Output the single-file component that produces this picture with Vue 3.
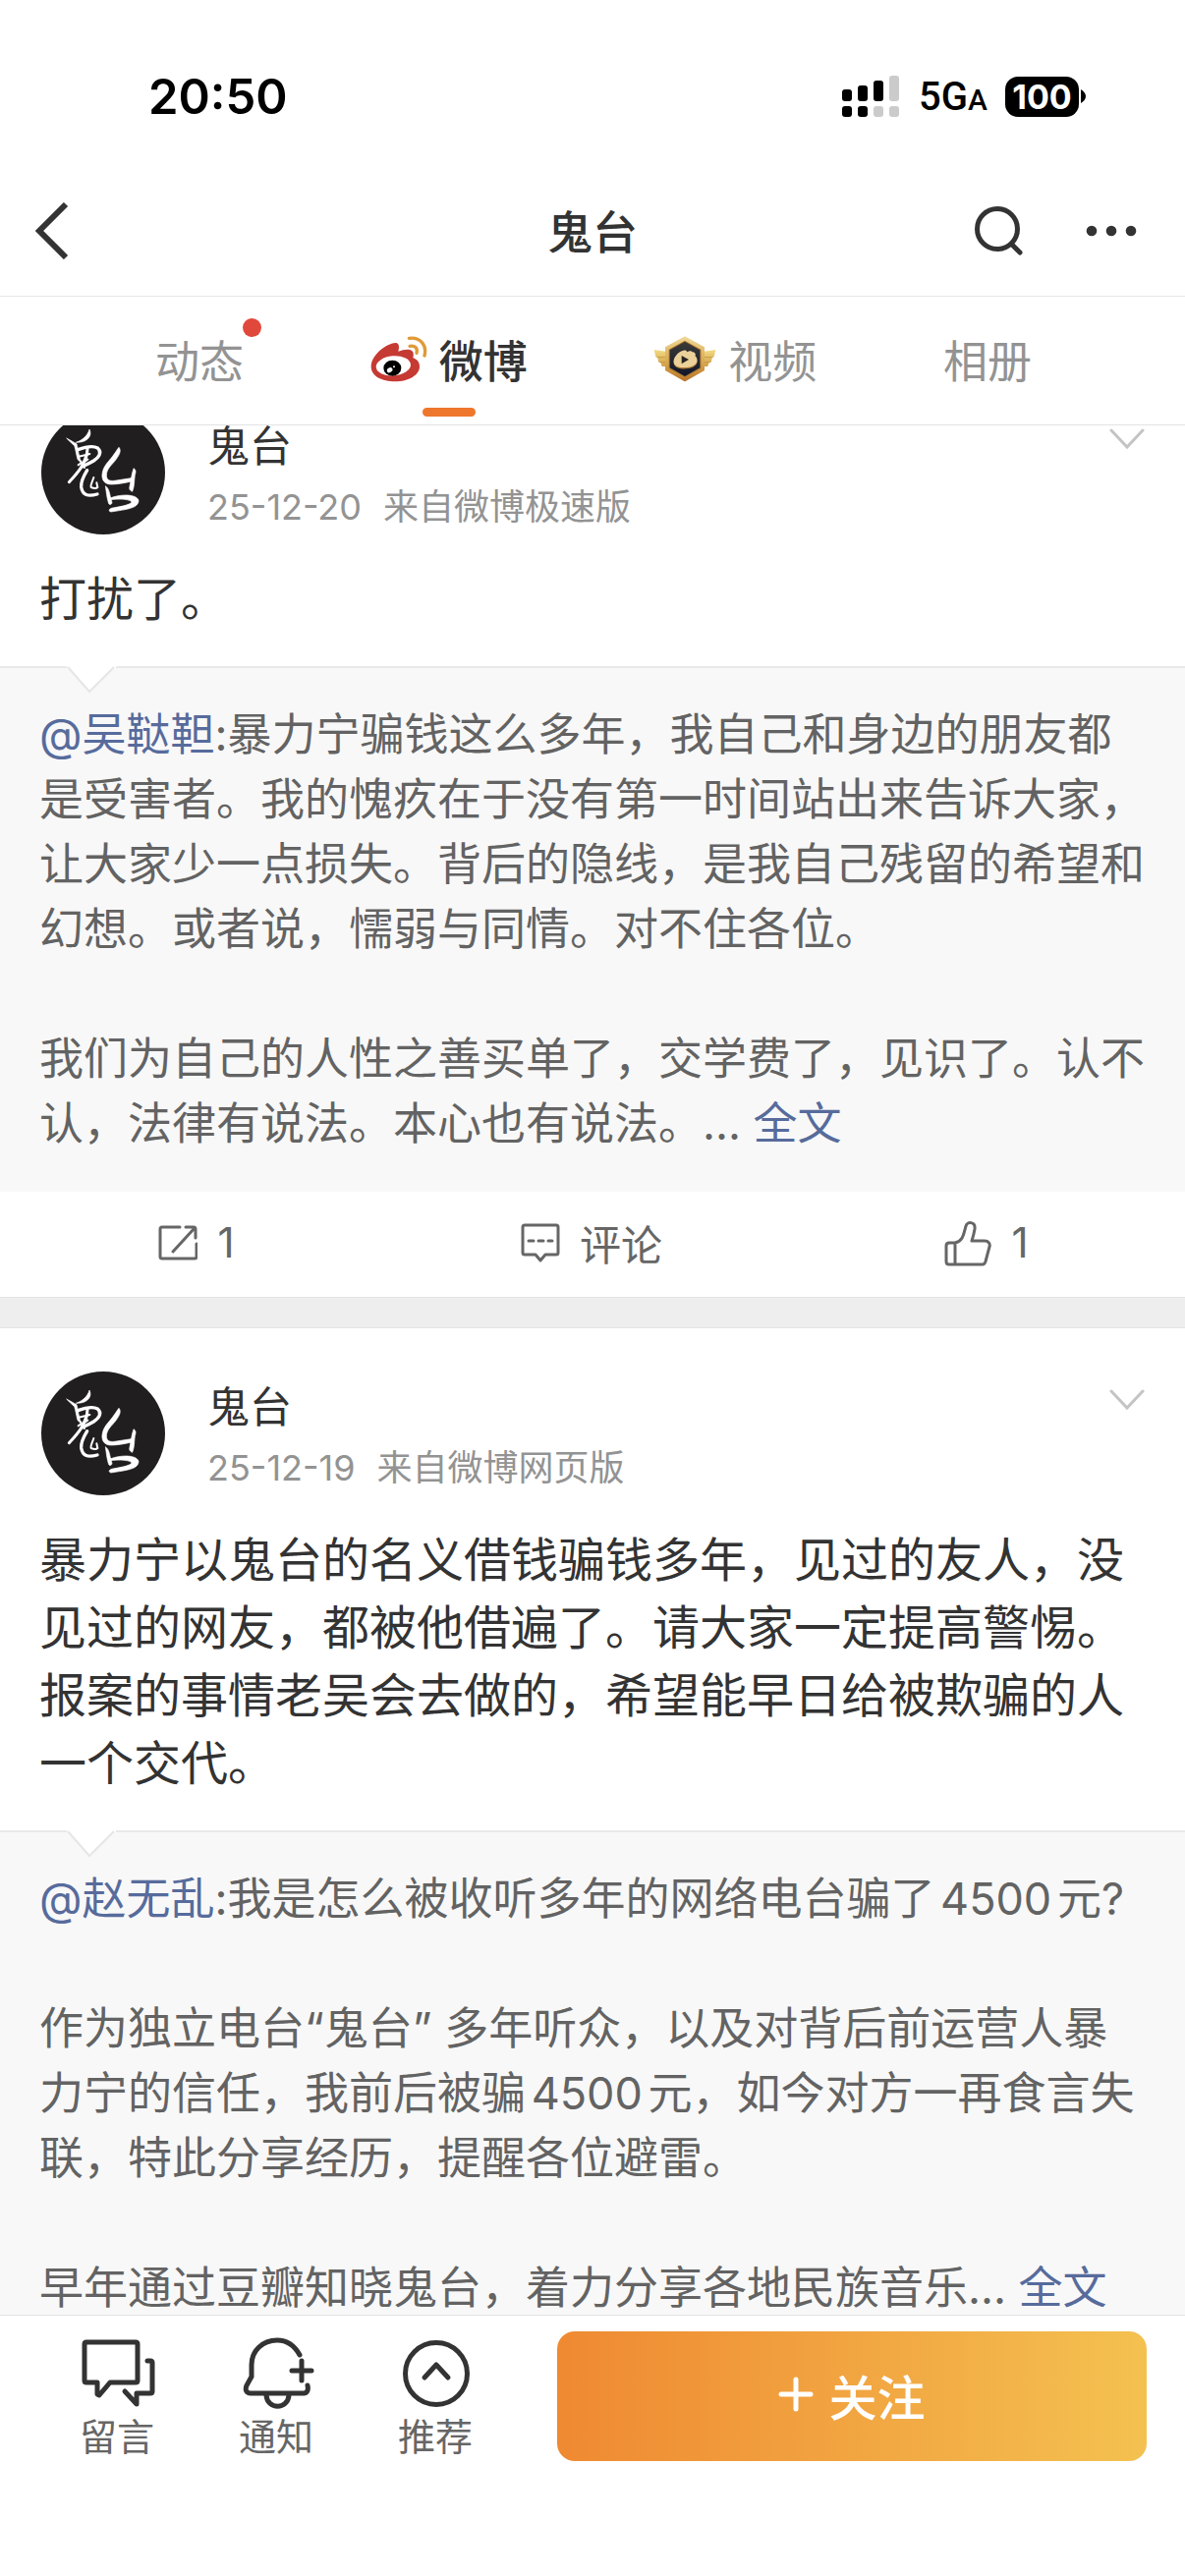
<script setup>
import { ref, reactive } from 'vue'

defineOptions({
  name: 'UserFeed'
})

const activeTab = ref('weibo')

const tabs = [
  { id: 'feed', label: '动态', dot: true },
  { id: 'weibo', label: '微博', icon: 'weibo' },
  { id: 'video', label: '视频', icon: 'video' },
  { id: 'album', label: '相册' }
]

const posts = reactive([
  {
    id: 1,
    author: '鬼台',
    date: '25-12-20',
    source: '来自微博极速版',
    text: '打扰了。',
    quoteUser: '@吴鞑靼',
    quoteText:
      ':暴力宁骗钱这么多年，我自己和身边的朋友都是受害者。我的愧疚在于没有第一时间站出来告诉大家，让大家少一点损失。背后的隐线，是我自己残留的希望和幻想。或者说，懦弱与同情。对不住各位。\n\n我们为自己的人性之善买单了，交学费了，见识了。认不认，法律有说法。本心也有说法。... ',
    actions: { repost: '1', comment: '评论', like: '1' }
  },
  {
    id: 2,
    author: '鬼台',
    date: '25-12-19',
    source: '来自微博网页版',
    text: '暴力宁以鬼台的名义借钱骗钱多年，见过的友人，没见过的网友，都被他借遍了。请大家一定提高警惕。报案的事情老吴会去做的，希望能早日给被欺骗的人一个交代。',
    quoteUser: '@赵无乱',
    quoteText:
      ':我是怎么被收听多年的网络电台骗了4500元?\n\n作为独立电台“鬼台” 多年听众，以及对背后前运营人暴力宁的信任，我前后被骗4500元，如今对方一再食言失联，特此分享经历，提醒各位避雷。\n\n早年通过豆瓣知晓鬼台，着力分享各地民族音乐... ',
    actions: null
  }
])
</script>

<template>
  <div class="screen">
    <div class="status-bar">
      <span class="time">20:50</span>
      <div class="status-right">
        <svg class="signal" width="58" height="42" viewBox="0 0 58 42">
          <g fill="#000">
            <rect x="0" y="14" width="10" height="12" rx="3" />
            <rect x="16" y="10" width="10" height="16" rx="3" />
            <rect x="32" y="5" width="10" height="21" rx="3" />
            <rect x="0" y="31" width="10" height="11" rx="3" />
            <rect x="16" y="31" width="10" height="11" rx="3" />
          </g>
          <g fill="#cbcbcb">
            <rect x="48" y="0" width="10" height="26" rx="3" />
            <rect x="32" y="31" width="10" height="11" rx="3" />
            <rect x="48" y="31" width="10" height="11" rx="3" />
          </g>
        </svg>
        <span class="network">5G<small>A</small></span>
        <span class="battery">
          <span class="battery-body">100</span>
          <svg width="5" height="14" viewBox="0 0 5 14"><path d="M0 0C3 2 5 4 5 7S3 12 0 14Z" /></svg>
        </span>
      </div>
    </div>

    <header class="nav-bar">
      <button type="button" class="icon-btn" aria-label="返回">
        <svg width="34" height="58" viewBox="0 0 34 58" fill="none" stroke="#333" stroke-width="6">
          <path d="M31 2L4 29l27 27" />
        </svg>
      </button>
      <h1 class="nav-title">鬼台</h1>
      <div class="nav-actions">
        <button type="button" class="icon-btn" aria-label="搜索">
          <svg width="50" height="50" viewBox="0 0 50 50" fill="none" stroke="#333" stroke-width="5" stroke-linecap="round">
            <circle cx="23" cy="23" r="20.5" />
            <path d="M38 39l8 8" />
          </svg>
        </button>
        <button type="button" class="icon-btn" aria-label="更多">
          <svg width="52" height="12" viewBox="0 0 52 12" fill="#333">
            <circle cx="6" cy="6" r="5.3" />
            <circle cx="26" cy="6" r="5.3" />
            <circle cx="46" cy="6" r="5.3" />
          </svg>
        </button>
      </div>
    </header>

    <nav class="tabs">
      <button
        v-for="tab in tabs"
        :key="tab.id"
        type="button"
        class="tab"
        :class="{ active: activeTab === tab.id }"
        @click="activeTab = tab.id"
      >
        <svg v-if="tab.icon === 'weibo'" width="58" height="47" viewBox="22 22 174 141">
          <path fill="#c53a33" d="M101 43C80 40 24 76 24 115c0 30 34 46 73 46 42 0 75-20 75-46 0-14-9-22-20-26 3-12 2-22-10-25-11-2-24 2-35 5 3-12 4-23-6-26z" />
          <ellipse cx="92" cy="113" rx="53" ry="30" fill="#fff" transform="rotate(-5 92 113)" />
          <ellipse cx="89" cy="120" rx="27" ry="24" fill="#000" />
          <ellipse cx="81" cy="126" rx="9" ry="7" fill="#fff" transform="rotate(-35 81 126)" />
          <circle cx="94" cy="116" r="3" fill="#fff" />
          <g fill="none" stroke="#e09a37" stroke-width="10" stroke-linecap="round">
            <path d="M142 53c17-3 25 7 21 21" />
            <path d="M140 29c32-5 56 20 47 53" />
          </g>
        </svg>
        <svg v-if="tab.icon === 'video'" width="64" height="48" viewBox="900 23 192 144">
          <defs>
            <linearGradient id="badgeGold" x1="0" y1="0" x2="0" y2="1">
              <stop offset="0" stop-color="#f0d795" />
              <stop offset="0.6" stop-color="#d6a650" />
              <stop offset="1" stop-color="#b87428" />
            </linearGradient>
            <linearGradient id="badgeWing" x1="0" y1="0" x2="0" y2="1">
              <stop offset="0" stop-color="#f3dc86" />
              <stop offset="1" stop-color="#d39d43" />
            </linearGradient>
            <linearGradient id="badgeDark" x1="0" y1="0" x2="0" y2="1">
              <stop offset="0" stop-color="#3c3b38" />
              <stop offset="1" stop-color="#10152b" />
            </linearGradient>
          </defs>
          <g fill="url(#badgeWing)">
            <path d="M902 68l36 5v46h-12l-4-12-7-2-2-12-6-3z" />
            <path d="M1090 68l-36 5v46h12l4-12 7-2 2-12 6-3z" />
          </g>
          <path d="M911 91h27M917 106h21M1081 91h-27M1075 106h-21" stroke="#b98a35" stroke-width="2" />
          <path fill="url(#badgeGold)" stroke="url(#badgeGold)" stroke-width="4" stroke-linejoin="round" d="M996 29l58 32v69l-58 33-58-33V61z" />
          <path fill="#a8742c" d="M996 40l49 27v58l-49 27-49-27V67z" />
          <path fill="url(#badgeDark)" d="M996 43l46 26v54l-46 26-46-26V69z" />
          <path fill="#b07c35" d="M992 73c-15 2-32 21-30 36 2 14 20 18 38 17 21-1 35-11 34-25 0-5-3-9-6-12 2-8-2-13-10-12-4-6-9-2-15 0-1-4-6-5-11-4z" />
          <path fill="#ecd09a" d="M992 70c-15 2-32 21-30 36 2 14 20 17 38 16 21-1 35-10 33-24 0-5-3-8-6-11 3-7-1-12-9-12-3-6-10-3-15 0-1-4-6-6-11-5z" />
          <path fill="#292523" d="M986 86l22 12-22 13z" />
        </svg>
        <span>{{ tab.label }}</span>
        <i v-if="tab.dot" class="red-dot"></i>
      </button>
    </nav>

    <main class="feed">
      <div class="feed-list">
        <article v-for="post in posts" :key="post.id" class="post">
          <div class="post-head">
            <svg class="avatar" width="126" height="126" viewBox="6 18 378 378">
              <circle cx="195" cy="207" r="189" fill="#201e1f" />
              <g fill="#fff" stroke="#fff" stroke-width="2" stroke-linejoin="round">
                <path d="M153 75c10 20-6 41-41 40 20-7 35-20 41-40z" />
                <path d="M83 102c12 6 22 13 31 17 5 20 7 38 13 57l-10-9c-5-20-7-34-10-42-8-7-15-14-24-23z" />
                <path d="M243 130c8 10 2 22-8 36-12 17-30 28-30 50 1 16 12 18 30 15l52-8-2 10c-22 6-44 9-62 10-22 1-33-11-31-31 3-26 20-38 32-55 9-12 12-18 19-27z" />
                <path d="M288 194c8 5 7 12 4 20-3 20-1 34-8 51-9-4-10-9-8-16 4-20 6-38 12-55z" />
                <path d="M202 248c13 9 12 26 20 50-1 7-6 9-10 4-6-18-7-35-10-54z" />
                <path d="M216 285c30-12 78-14 87 6 1 25-34 28-84 36-8-2-7-8 1-11 28-6 51-8 62-18 0-9-35-12-66-8z" />
              </g>
              <g fill="none" stroke="#fff" stroke-linecap="round">
                <path d="M118 137c24-9 48-12 60-5 14 12 6 27-12 39-13 8-22 12-34 17" stroke-width="10" />
                <path d="M147 133c0 22-6 36-21 61-12 18-22 28-35 42" stroke-width="9" />
                <path d="M118 159c12-3 22-5 36-9M119 184c10-9 21-9 29-17M126 172l12 20" stroke-width="6" />
                <path d="M146 200c-12 20-20 35-18 51 4 25 20 30 49 22" stroke-width="10" />
                <path d="M166 222c-5 15-11 26-8 30 7 3 16 4 20 0l-3-14" stroke-width="6" />
              </g>
            </svg>
            <div class="post-info">
              <h2 class="author">{{ post.author }}</h2>
              <div class="meta">
                <time>{{ post.date }}</time>
                <span>{{ post.source }}</span>
              </div>
            </div>
            <button type="button" class="icon-btn post-menu" aria-label="更多操作">
              <svg width="38" height="22" viewBox="0 0 38 22" fill="none" stroke="#c4c4c4" stroke-width="3" stroke-linecap="round">
                <path d="M3 2l16 17L35 2" />
              </svg>
            </button>
          </div>

          <p class="post-text">{{ post.text }}</p>

          <div class="quote">
            <svg class="quote-notch" width="50" height="28" viewBox="0 0 50 28">
              <path d="M0 0h50v2l-2 0L24 26 2 2H0z" fill="#fff" />
              <path d="M1 1l22 25L48 1" fill="none" stroke="#e6e6e6" stroke-width="2" />
            </svg>
            <p class="quote-text"><a href="#">{{ post.quoteUser }}</a>{{ post.quoteText }}<a href="#">全文</a></p>
          </div>

          <div v-if="post.actions" class="post-actions">
            <button type="button" class="action">
              <svg width="40" height="36" viewBox="0 0 40 36" fill="none" stroke="#666" stroke-width="3" stroke-linecap="round" stroke-linejoin="round">
                <path d="M22 2H4Q2 2 2 4v28q0 2 2 2h33q2 0 2-2V19" />
                <path d="M28 2h8q2 0 2 2v9M37 3L15 27" />
              </svg>
              <span>{{ post.actions.repost }}</span>
            </button>
            <button type="button" class="action">
              <svg width="40" height="40" viewBox="0 0 40 40" fill="none" stroke="#666" stroke-width="3" stroke-linecap="round" stroke-linejoin="round">
                <path d="M4 2h32q2 0 2 2v26q0 2-2 2H25l-5 6-5-6H4q-2 0-2-2V4q0-2 2-2z" />
                <path d="M8 18h5M18 18h5M28 18h4" />
              </svg>
              <span>{{ post.actions.comment }}</span>
            </button>
            <button type="button" class="action">
              <svg width="48" height="48" viewBox="0 0 48 48" fill="none" stroke="#666" stroke-width="3" stroke-linejoin="round">
                <path d="M11 24C20 22 20 13 22 7c1-5 10-5 9 3-1 6-2 9-3 12h13c4 0 6 3 5 6l-4 15c-1 3-2 3-5 3H5q-3 0-3-3V27q0-3 3-3zM11 24v22" />
              </svg>
              <span>{{ post.actions.like }}</span>
            </button>
          </div>
        </article>
      </div>
    </main>

    <footer class="bottom-bar">
      <button type="button" class="tool">
        <svg width="78" height="78" viewBox="0 0 78 78" fill="none" stroke="#333" stroke-width="5" stroke-linecap="round" stroke-linejoin="round">
          <path d="M8 8h50q2 0 2 2v37q0 2-2 2H32L21 62l-2-1V49H8q-2 0-2-2V10q0-2 2-2z" />
          <path d="M70 27h3q2 0 2 2v29q0 2-2 2H59v11L47 58" />
        </svg>
        <span>留言</span>
      </button>
      <button type="button" class="tool">
        <svg width="78" height="78" viewBox="-2 0 78 78" fill="none" stroke="#333" stroke-width="5" stroke-linecap="round">
          <path d="M61 21C56 12 48 6 38 6 23 6 12 17 12 31v12l-5 9c-2 5 0 8 4 8h54c4 0 5-4 4-8" />
          <path d="M27 62c1 15 22 15 23 0M63 27v20M53 37h20" />
        </svg>
        <span>通知</span>
      </button>
      <button type="button" class="tool">
        <svg width="78" height="78" viewBox="-1 0 78 78" fill="none" stroke="#333" stroke-width="5" stroke-linecap="round" stroke-linejoin="round">
          <circle cx="39" cy="40" r="31.5" />
          <path d="M27 44l12-13 12 13" />
        </svg>
        <span>推荐</span>
      </button>
      <button type="button" class="follow">
        <svg width="36" height="36" viewBox="0 0 36 36" stroke="#fff" stroke-width="5" stroke-linecap="round">
          <path d="M18 3v30M3 18h30" />
        </svg>
        <span>关注</span>
      </button>
    </footer>
  </div>
</template>

<style>
body {
  margin: 0;
  background-color: #fff;
}
</style>

<style scoped>
.screen {
  display: flex;
  flex-direction: column;
  height: 100vh;
  overflow: hidden;
  background-color: #fff;
  color: #333;
  font-family: Inter, 'Noto Sans CJK SC', sans-serif;
}

button {
  padding: 0;
  border: none;
  background: none;
  font-family: inherit;
  color: inherit;
  cursor: pointer;
}

svg {
  display: block;
  flex: none;
}

.status-bar {
  display: flex;
  justify-content: space-between;
  align-items: center;
  padding: 66px 101px 38px 151px;
  height: 64px;
  color: #000;
}

.time {
  font-size: 49px;
  font-weight: 600;
}

.status-right {
  display: flex;
  align-items: center;
}

.network {
  margin: 0 18px 0 20px;
  font-family: Roboto, sans-serif;
  font-size: 40px;
  font-weight: 500;
}

.network small {
  font-size: 30px;
}

.battery {
  display: flex;
  align-items: center;
  gap: 2px;
}

.battery-body {
  width: 75px;
  height: 41px;
  border-radius: 13px;
  background-color: #000;
  color: #fff;
  font-size: 34px;
  font-weight: 700;
  line-height: 41px;
  text-align: center;
}

.nav-bar {
  display: grid;
  grid-template-columns: 1fr auto 1fr;
  align-items: center;
  height: 133px;
  padding: 0 36px;
  border-bottom: 1px solid #e6e6e6;
}

.nav-title {
  margin: 0;
  padding-bottom: 4px;
  font-size: 46px;
  font-weight: 500;
}

.nav-actions {
  display: flex;
  justify-content: flex-end;
  align-items: center;
  gap: 63px;
  padding-right: 13px;
}

.tabs {
  display: flex;
  justify-content: space-between;
  padding: 0 156px 0 158px;
  height: 130px;
  border-bottom: 1px solid #e3e3e3;
  background-color: #fff;
}

.tab {
  position: relative;
  display: flex;
  align-items: center;
  gap: 12px;
  padding-bottom: 4px;
  font-size: 45px;
  color: #939393;
}

.tab.active {
  color: #333;
  font-weight: 500;
}

.tab.active::after {
  content: '';
  position: absolute;
  bottom: 8px;
  left: 50%;
  width: 54px;
  height: 9px;
  margin-left: -27px;
  border-radius: 5px;
  background-color: #ef762d;
}

.red-dot {
  position: absolute;
  top: 22px;
  right: -18px;
  width: 19px;
  height: 19px;
  border-radius: 50%;
  background-color: #e1483c;
}

.feed {
  flex: 1;
  min-height: 0;
  overflow: hidden;
}

/* the list is scrolled slightly under the tabs */
.feed-list {
  display: flex;
  flex-direction: column;
  gap: 30px;
  margin-top: -60px;
  background-color: #eee;
}

.post {
  border-top: 1px solid #e4e4e4;
  border-bottom: 1px solid #e4e4e4;
  background-color: #fff;
}

.post-head {
  display: flex;
  padding: 44px 40px 0 42px;
}

.post-info {
  flex: 1;
  padding: 8px 0 0 43px;
}

.author {
  margin: 0;
  font-size: 43px;
  font-weight: 400;
  line-height: 56px;
}

.meta {
  display: flex;
  gap: 22px;
  margin-top: 10px;
  font-size: 36px;
  line-height: 48px;
  color: #939393;
}

.post-menu {
  align-self: flex-start;
  padding-top: 18px;
}

.post-text {
  margin: 0;
  padding: 31px 40px 34px;
  font-size: 48px;
  line-height: 69px;
}

.quote {
  position: relative;
  padding: 35px 40px 36px;
  border-top: 2px solid #e9e9e9;
  background-color: #f8f8f8;
}

.quote-notch {
  position: absolute;
  top: -2px;
  left: 68px;
}

.quote-text {
  margin: 0;
  font-size: 45px;
  line-height: 66px;
  color: #636363;
  white-space: pre-line;
  text-autospace: normal;
}

.quote-text a {
  color: #576b9c;
  text-decoration: none;
}

.post-actions {
  display: flex;
  height: 107px;
}

.action {
  flex: 1;
  display: flex;
  justify-content: center;
  align-items: center;
  gap: 20px;
  padding: 0 2px 4px 0;
  font-size: 42px;
  color: #666;
}

.bottom-bar {
  display: flex;
  align-items: center;
  padding: 16px 39px 117px 38px;
  border-top: 1px solid #e3e3e3;
  background-color: #fff;
}

.tool {
  display: flex;
  flex-direction: column;
  align-items: center;
  gap: 4px;
  width: 162px;
  font-size: 38px;
  line-height: 44px;
  color: #666;
}

.follow {
  flex: 1;
  display: flex;
  justify-content: center;
  align-items: center;
  gap: 15px;
  height: 132px;
  margin-left: 43px;
  padding-bottom: 4px;
  border-radius: 18px;
  background: linear-gradient(90deg, #ef8932, #f4c150);
  color: #fff;
  font-size: 49px;
  font-weight: 500;
}
</style>
